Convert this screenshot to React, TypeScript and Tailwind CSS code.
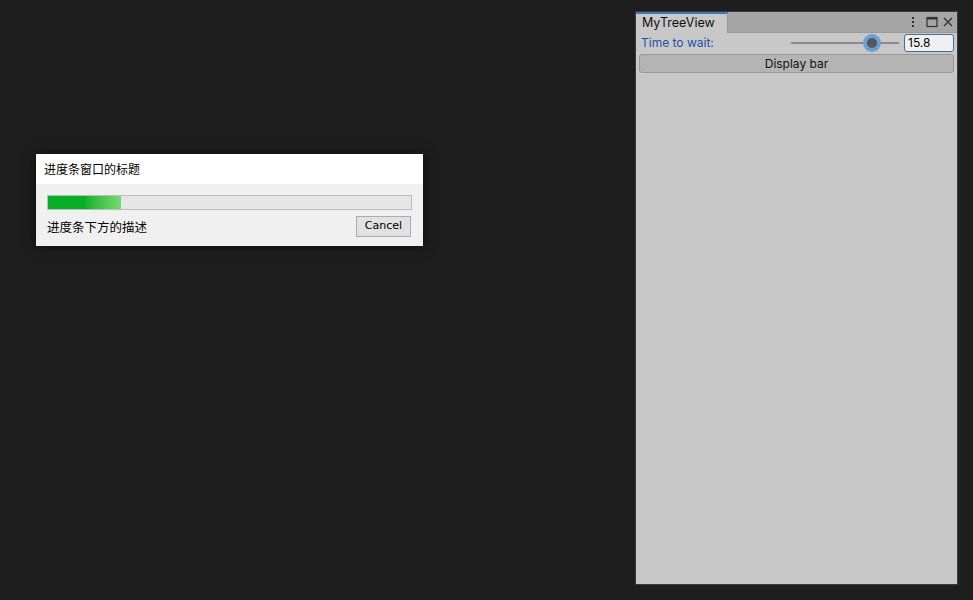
import React from "react";

const cjk = { fontFamily: '"Noto Sans CJK SC", "Noto Sans", sans-serif' };
const unity = { fontFamily: 'Inter, "Noto Sans", sans-serif' };

const ProgressDialog = () => (
  <div
    className="absolute left-[36px] top-[154px] w-[387px] shadow-[0_0_12px_rgba(0,0,0,0.6)]"
    style={cjk}
  >
    <div className="h-[30px] bg-white pl-[8px] flex items-center text-[12px] text-black pb-[1px]">
      进度条窗口的标题
    </div>
    <div className="bg-[#f0f0f0] h-[62px] pt-[11px] px-[11px]">
      <div className="h-[15px] border border-[#bcbcbc] bg-[#e6e6e6] relative overflow-hidden">
        <div className="h-full w-[73px] bg-gradient-to-r from-[#06b025] from-50% to-[#70dd70]" />
      </div>
      <div className="flex items-center justify-between mt-[6px]">
        <span className="text-[12.5px] text-black pt-[2px]">进度条下方的描述</span>
        <button
          className="w-[55px] h-[21px] border border-[#adadad] bg-[#e1e1e1] text-[11px] text-black mr-[1px]"
          style={{ fontFamily: '"DejaVu Sans", sans-serif' }}
        >
          Cancel
        </button>
      </div>
    </div>
  </div>
);

const TreeViewPanel = () => (
  <div
    className="absolute left-[635px] top-[11px] w-[323px] h-[574px] border border-[#3a3a3a] bg-[#c8c8c8] flex flex-col"
    style={unity}
  >
    <div className="h-[21px] bg-[#a5a5a5] flex items-end border-b border-[#999]">
      <div className="w-[92px] h-[21px] bg-[#c8c8c8] border-t-2 border-[#3a79bb] pl-[6px] text-[12.5px] text-[#111] leading-[18px] -mb-px border-r border-r-[#999]">
        MyTreeView
      </div>
      <div className="flex-1" />
      <div className="flex items-center h-[21px] pr-[3px] text-[#333]">
        <svg width="6" height="12" viewBox="0 0 6 12">
          <rect x="2" y="1" width="2" height="2" fill="#333" />
          <rect x="2" y="5" width="2" height="2" fill="#333" />
          <rect x="2" y="9" width="2" height="2" fill="#333" />
        </svg>
        <svg width="12" height="12" viewBox="0 0 12 12" className="ml-[10px]">
          <rect x="1" y="1.5" width="10" height="9" fill="none" stroke="#333" strokeWidth="1.2" />
          <rect x="1" y="1.5" width="10" height="2" fill="#333" />
        </svg>
        <svg width="12" height="12" viewBox="0 0 12 12" className="ml-[4px]">
          <path d="M2 2 L10 10 M10 2 L2 10" stroke="#333" strokeWidth="1.3" />
        </svg>
      </div>
    </div>
    <div className="flex items-center h-[20px] pl-[5px] pr-[3px]">
      <span className="text-[12px] text-[#1b55a8] w-[145px]">Time to wait:</span>
      <div className="flex-1 relative h-[20px] flex items-center pl-[5px] pr-[5px]">
        <div className="h-[2px] w-full bg-[#8a8a8a]" />
        <div className="absolute left-[77px] top-[1px] w-[18px] h-[18px] rounded-full bg-[#6a9fd8] flex items-center justify-center">
          <div className="w-[10px] h-[10px] rounded-full bg-[#575757]" />
        </div>
      </div>
      <div className="w-[50px] h-[18px] border border-[#3a72b0] rounded-[3px] bg-[#f0f0f0] text-[12px] text-black pl-[3px] leading-[16px]">
        15.8
      </div>
    </div>
    <div className="mx-[3px] mt-[1px] h-[19px] border border-[#999] rounded-[3px] bg-[#b4b4b4] flex items-center justify-center text-[12px] text-[#111]">
      Display bar
    </div>
  </div>
);

export default function App() {
  return (
    <div className="relative w-[973px] h-[600px] bg-[#1e1e1e] overflow-hidden">
      <ProgressDialog />
      <TreeViewPanel />
    </div>
  );
}
